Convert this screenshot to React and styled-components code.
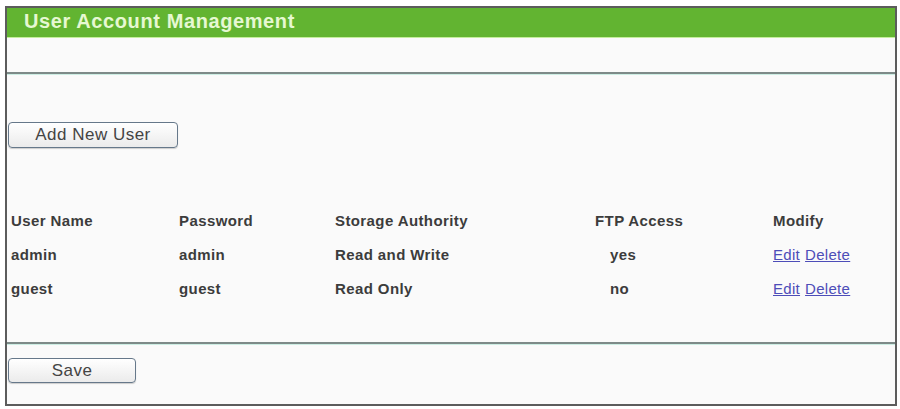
import React from 'react';
import styled, { createGlobalStyle } from 'styled-components';

const GlobalStyle = createGlobalStyle`
  html, body {
    margin: 0;
    padding: 0;
    background: #ffffff;
  }
  body {
    font-family: "Liberation Sans", Arial, sans-serif;
    color: #3c3c3c;
  }
`;

const Page = styled.div`
  padding: 6px 3px 3px 5px;
`;

const Frame = styled.div`
  width: 888px;
  border: 2px solid #5c5c5c;
  background: #fafafa;
  display: flex;
  flex-direction: column;
`;

const TitleBar = styled.div`
  height: 29px;
  background: #62b431;
  border-bottom: 1px solid #c4ee9c;
  padding-left: 17px;
  line-height: 27px;
  font-size: 20px;
  font-weight: bold;
  letter-spacing: 0.6px;
  color: #e6f8d2;
`;

const BlankRow = styled.div`
  height: 34px;
`;

const Separator = styled.div`
  height: 2px;
  background: #7d8a88;
  border-bottom: 1px solid #cdeee4;
`;

const Section = styled.div`
  padding: ${(p) => p.$pad || '0'};
`;

const Button = styled.button`
  display: block;
  width: ${(p) => p.$width}px;
  height: ${(p) => p.$height || 26}px;
  margin-left: 1px;
  padding: 0;
  border: 1px solid #66788a;
  border-radius: 4px;
  background: linear-gradient(#ffffff, #ebebeb);
  box-shadow: 0 1px 1px rgba(0, 0, 0, 0.18);
  font-family: "Liberation Sans", Arial, sans-serif;
  font-size: 17px;
  letter-spacing: 0.5px;
  color: #444444;
  cursor: pointer;
`;

const UserTable = styled.table`
  border-collapse: collapse;
  width: 100%;
  table-layout: fixed;
  margin-top: 55px;
  margin-bottom: 37px;
`;

const Cell = styled.td`
  height: 34px;
  padding: 0 0 0 ${(p) => p.$indent || 0}px;
  font-size: 15px;
  font-weight: bold;
  letter-spacing: 0.4px;
  white-space: nowrap;
  vertical-align: middle;
`;

const HeadCell = styled(Cell).attrs({ as: 'th' })`
  text-align: left;
  width: ${(p) => p.$width}px;
`;

const ActionLink = styled.a`
  color: #4d4db8;
  text-decoration: underline;
  font-weight: normal;
  letter-spacing: 0.3px;
  cursor: pointer;
  & + & {
    margin-left: 5px;
  }
`;

const users = [
  { name: 'admin', password: 'admin', authority: 'Read and Write', ftp: 'yes' },
  { name: 'guest', password: 'guest', authority: 'Read Only', ftp: 'no' },
];

export default function App() {
  return (
    <>
      <GlobalStyle />
      <Page>
        <Frame>
          <TitleBar>User Account Management</TitleBar>
          <BlankRow />
          <Separator />
          <Section $pad="47px 0 0 0">
            <Button $width={170}>Add New User</Button>
            <UserTable>
              <thead>
                <tr>
                  <HeadCell $width={168} $indent={4}>User Name</HeadCell>
                  <HeadCell $width={156}>Password</HeadCell>
                  <HeadCell $width={260}>Storage Authority</HeadCell>
                  <HeadCell $width={178}>FTP Access</HeadCell>
                  <HeadCell>Modify</HeadCell>
                </tr>
              </thead>
              <tbody>
                {users.map((u) => (
                  <tr key={u.name}>
                    <Cell $indent={4}>{u.name}</Cell>
                    <Cell>{u.password}</Cell>
                    <Cell>{u.authority}</Cell>
                    <Cell $indent={15}>{u.ftp}</Cell>
                    <Cell>
                      <ActionLink>Edit</ActionLink>
                      <ActionLink>Delete</ActionLink>
                    </Cell>
                  </tr>
                ))}
              </tbody>
            </UserTable>
          </Section>
          <Separator />
          <Section $pad="13px 0 21px 0">
            <Button $width={128} $height={25}>Save</Button>
          </Section>
        </Frame>
      </Page>
    </>
  );
}
